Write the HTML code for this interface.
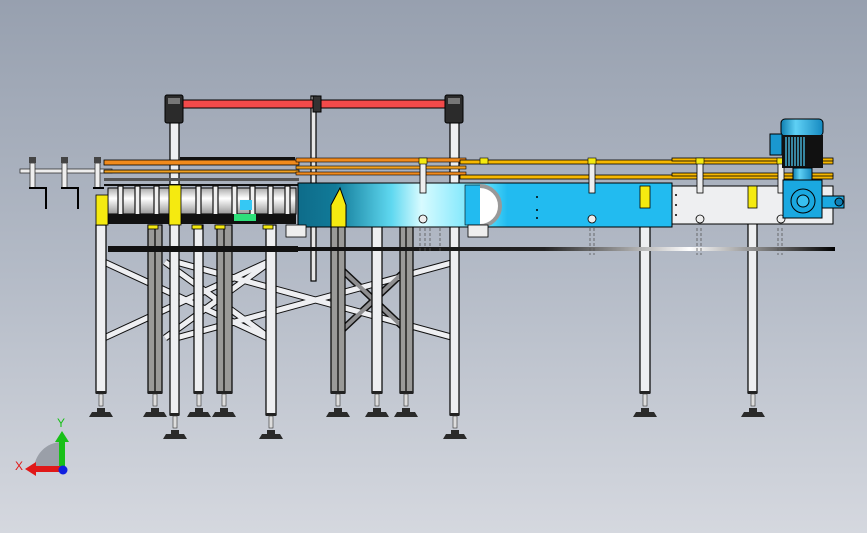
<!DOCTYPE html>
<html><head><meta charset="utf-8"><style>
html,body{margin:0;padding:0;width:867px;height:533px;overflow:hidden}
body{background:linear-gradient(#97a0af,#b3bac6 50%,#d5d8df)}
svg{position:absolute;left:0;top:0}
text{font-family:"Liberation Sans",sans-serif}
</style></head><body>
<svg width="867" height="533" viewBox="0 0 867 533">
<defs>
<linearGradient id="belt" x1="0" x2="1" y1="0" y2="0">
<stop offset="0" stop-color="#0e6c8a"/><stop offset="0.1" stop-color="#117a98"/>
<stop offset="0.25" stop-color="#5fd8f0"/><stop offset="0.33" stop-color="#d8fbff"/>
<stop offset="0.5" stop-color="#5ee0fb"/><stop offset="0.56" stop-color="#22bbf0"/><stop offset="1" stop-color="#22bbf0"/>
</linearGradient>
<linearGradient id="drum" x1="0" x2="0" y1="0" y2="1">
<stop offset="0" stop-color="#aaa"/><stop offset="0.4" stop-color="#fff"/><stop offset="1" stop-color="#999"/>
</linearGradient>
<linearGradient id="mot" x1="0" x2="1"><stop offset="0" stop-color="#0f7fb0"/><stop offset="0.35" stop-color="#5fd0f5"/><stop offset="1" stop-color="#1589c0"/></linearGradient>
<linearGradient id="rod" x1="0" x2="1"><stop offset="0" stop-color="#000"/><stop offset="0.6" stop-color="#222"/><stop offset="0.8" stop-color="#fff"/><stop offset="1" stop-color="#000"/></linearGradient>
</defs>

<g stroke-linecap="butt">
<g stroke="#111" stroke-width="7">
<line x1="104" y1="262" x2="268" y2="338"/><line x1="104" y1="338" x2="268" y2="262"/>
<line x1="176" y1="262" x2="455" y2="338"/><line x1="176" y1="338" x2="455" y2="262"/>
<line x1="165" y1="262" x2="270" y2="338"/><line x1="165" y1="338" x2="270" y2="262"/>
<line x1="340" y1="268" x2="408" y2="332"/><line x1="340" y1="332" x2="408" y2="268"/>
</g>
<g stroke="#eeeff2" stroke-width="5">
<line x1="104" y1="262" x2="268" y2="338"/><line x1="104" y1="338" x2="268" y2="262"/>
<line x1="176" y1="262" x2="455" y2="338"/><line x1="176" y1="338" x2="455" y2="262"/>
<line x1="165" y1="262" x2="270" y2="338"/><line x1="165" y1="338" x2="270" y2="262"/>
</g>
<g stroke="#8e8e90" stroke-width="4">
<line x1="340" y1="268" x2="408" y2="332"/><line x1="340" y1="332" x2="408" y2="268"/>
</g>
</g>

<g stroke="#000" stroke-width="1.2">
<rect x="148" y="225" width="14" height="168" fill="#9a9a98"/><line x1="155" y1="225" x2="155" y2="393"/>
<rect x="217" y="225" width="15" height="168" fill="#9a9a98"/><line x1="224" y1="225" x2="224" y2="393"/>
<rect x="331" y="205" width="14" height="188" fill="#9a9a98"/><line x1="338" y1="205" x2="338" y2="393"/>
<rect x="400" y="225" width="13" height="168" fill="#9a9a98"/><line x1="406" y1="225" x2="406" y2="393"/>
<rect x="96" y="225" width="10" height="168" fill="#eeeff1"/>
<rect x="194" y="225" width="9" height="168" fill="#eeeff1"/>
<rect x="372" y="225" width="10" height="168" fill="#eeeff1"/>
<rect x="640" y="205" width="10" height="188" fill="#eeeff1"/>
<rect x="748" y="205" width="9" height="188" fill="#eeeff1"/>
<rect x="170" y="110" width="9" height="305" fill="#eeeff1"/>
<rect x="266" y="225" width="10" height="190" fill="#eeeff1"/>
<rect x="450" y="110" width="9" height="305" fill="#eeeff1"/>
<rect x="311" y="96" width="5" height="185" fill="#e6e6e6"/>
</g>
<g fill="#222">
<rect x="96" y="391" width="10" height="3"/><rect x="148" y="391" width="14" height="3"/><rect x="194" y="391" width="9" height="3"/>
<rect x="217" y="391" width="15" height="3"/><rect x="331" y="391" width="14" height="3"/><rect x="372" y="391" width="10" height="3"/>
<rect x="400" y="391" width="13" height="3"/><rect x="640" y="391" width="10" height="3"/><rect x="748" y="391" width="9" height="3"/>
<rect x="170" y="413" width="9" height="3"/><rect x="266" y="413" width="10" height="3"/><rect x="450" y="413" width="9" height="3"/>
</g>
<g fill="#ddd" stroke="#333" stroke-width="0.6">
<rect x="99" y="394" width="4" height="12"/><rect x="153" y="394" width="4" height="12"/><rect x="197" y="394" width="4" height="12"/>
<rect x="222" y="394" width="4" height="12"/><rect x="336" y="394" width="4" height="12"/><rect x="375" y="394" width="4" height="12"/>
<rect x="404" y="394" width="4" height="12"/><rect x="643" y="394" width="4" height="12"/><rect x="751" y="394" width="4" height="12"/>
<rect x="173" y="416" width="4" height="12"/><rect x="269" y="416" width="4" height="12"/><rect x="453" y="416" width="4" height="12"/>
</g>
<g fill="#2a2a2a">
<path d="M89 417 h24 l-3 -5 h-18z M143 417 h24 l-3 -5 h-18z M187 417 h24 l-3 -5 h-18z M212 417 h24 l-3 -5 h-18z M326 417 h24 l-3 -5 h-18z M365 417 h24 l-3 -5 h-18z M394 417 h24 l-3 -5 h-18z M633 417 h24 l-3 -5 h-18z M741 417 h24 l-3 -5 h-18z"/>
<path d="M163 439 h24 l-3 -5 h-18z M259 439 h24 l-3 -5 h-18z M443 439 h24 l-3 -5 h-18z"/>
<path d="M97 412 h8 v-4 h-8z M151 412 h8 v-4 h-8z M195 412 h8 v-4 h-8z M220 412 h8 v-4 h-8z M334 412 h8 v-4 h-8z M373 412 h8 v-4 h-8z M402 412 h8 v-4 h-8z M641 412 h8 v-4 h-8z M749 412 h8 v-4 h-8z M171 434 h8 v-4 h-8z M267 434 h8 v-4 h-8z M451 434 h8 v-4 h-8z"/>
</g>

<rect x="108" y="247" width="727" height="4" fill="url(#rod)"/>
<rect x="108" y="246" width="190" height="6" fill="#111"/>

<g stroke="#555" stroke-width="0.8" stroke-dasharray="3 2">
<line x1="590" y1="228" x2="590" y2="255"/><line x1="594" y1="228" x2="594" y2="255"/>
<line x1="697" y1="228" x2="697" y2="255"/><line x1="701" y1="228" x2="701" y2="255"/>
<line x1="778" y1="228" x2="778" y2="255"/><line x1="782" y1="228" x2="782" y2="255"/>
<line x1="420" y1="228" x2="420" y2="252"/><line x1="425" y1="228" x2="425" y2="252"/><line x1="430" y1="228" x2="430" y2="252"/><line x1="440" y1="228" x2="440" y2="252"/>
</g>

<rect x="183" y="100" width="264" height="8" fill="#f24a4a" stroke="#000" stroke-width="1"/>
<rect x="313" y="96" width="8" height="16" fill="#333" stroke="#000"/>
<g fill="#2b2b2b" stroke="#000">
<rect x="165" y="95" width="18" height="28" rx="2"/><rect x="445" y="95" width="18" height="28" rx="2"/>
</g>
<g fill="#777"><rect x="168" y="98" width="12" height="6"/><rect x="448" y="98" width="12" height="6"/></g>

<rect x="20" y="169" width="92" height="4" fill="#eee" stroke="#333" stroke-width="0.8"/>
<g fill="#eee" stroke="#333" stroke-width="0.8">
<rect x="30" y="163" width="5" height="25"/><rect x="62" y="163" width="5" height="25"/><rect x="95" y="163" width="5" height="25"/>
</g>
<g fill="#444"><rect x="29" y="157" width="7" height="6"/><rect x="61" y="157" width="7" height="6"/><rect x="94" y="157" width="7" height="6"/></g>
<path d="M29 188 H46 V209 M61 188 H78 V209 M93 188 H104" stroke="#000" stroke-width="2" fill="none"/>

<rect x="104" y="160" width="195" height="5" fill="#f08a1c" stroke="#000" stroke-width="0.8"/>
<rect x="104" y="170" width="195" height="3" fill="#f0a020" stroke="#000" stroke-width="0.8"/>
<rect x="104" y="178" width="195" height="3" fill="#555"/>
<rect x="104" y="184" width="195" height="2" fill="#111"/>
<rect x="108" y="188" width="188" height="26" fill="url(#drum)" stroke="#000"/>
<g fill="#eee" stroke="#111" stroke-width="1.2">
<rect x="118" y="186" width="5" height="30"/><rect x="135" y="186" width="5" height="30"/><rect x="154" y="186" width="5" height="30"/>
<rect x="196" y="186" width="5" height="30"/><rect x="213" y="186" width="5" height="30"/><rect x="232" y="186" width="5" height="30"/>
<rect x="250" y="186" width="5" height="30"/><rect x="268" y="186" width="5" height="30"/><rect x="285" y="186" width="5" height="30"/>
</g>
<rect x="108" y="214" width="188" height="10" fill="#111"/>
<rect x="234" y="214" width="22" height="7" fill="#2ee07a"/>
<rect x="240" y="200" width="12" height="10" fill="#35c8f4"/>
<g fill="#f5ea10" stroke="#000" stroke-width="0.8">
<rect x="96" y="195" width="12" height="30"/><rect x="169" y="185" width="12" height="40"/>
<rect x="148" y="225" width="10" height="4"/><rect x="192" y="225" width="10" height="4"/><rect x="215" y="225" width="10" height="4"/><rect x="263" y="225" width="10" height="4"/>
</g>
<rect x="180" y="157" width="115" height="3" fill="#111"/>
<rect x="296" y="158" width="170" height="4" fill="#f08a1c" stroke="#000" stroke-width="0.6"/>
<rect x="296" y="166" width="170" height="3" fill="#f0a020" stroke="#000" stroke-width="0.6"/>
<rect x="296" y="172" width="170" height="3" fill="#f08a1c" stroke="#000" stroke-width="0.6"/>

<g fill="#f7b800" stroke="#000" stroke-width="0.8">
<rect x="460" y="160" width="373" height="4"/><rect x="460" y="175" width="373" height="4"/>
<rect x="672" y="158" width="161" height="3"/><rect x="672" y="173" width="161" height="3"/>
</g>

<rect x="298" y="183" width="374" height="44" fill="url(#belt)" stroke="#000"/>
<rect x="672" y="186" width="161" height="38" fill="#eeeff1" stroke="#000"/>
<rect x="465" y="185" width="20" height="40" fill="#22bbf0" stroke="#000" stroke-width="0.6"/>
<path d="M480 186 a20 20 0 0 1 0 40" fill="#fff" stroke="#999" stroke-width="4"/>
<rect x="640" y="186" width="10" height="22" fill="#f5ea10" stroke="#000" stroke-width="0.8"/>
<rect x="748" y="186" width="9" height="22" fill="#f5ea10" stroke="#000" stroke-width="0.8"/>
<path d="M331 205 L340 188 L346 205 V227 H331z" fill="#f5ea10" stroke="#000"/>
<g fill="#000"><circle cx="537" cy="197" r="1"/><circle cx="537" cy="210" r="1"/><circle cx="537" cy="218" r="1"/><circle cx="676" cy="195" r="1"/><circle cx="676" cy="205" r="1"/><circle cx="676" cy="215" r="1"/></g>
<g fill="#eee" stroke="#000" stroke-width="0.8">
<rect x="420" y="163" width="6" height="30"/><rect x="589" y="163" width="6" height="30"/><rect x="697" y="163" width="6" height="30"/><rect x="778" y="163" width="6" height="30"/>
<circle cx="423" cy="219" r="4"/><circle cx="592" cy="219" r="4"/><circle cx="700" cy="219" r="4"/><circle cx="781" cy="219" r="4"/>
</g>
<g fill="#f5ea10" stroke="#000" stroke-width="0.6">
<rect x="419" y="158" width="8" height="6"/><rect x="588" y="158" width="8" height="6"/><rect x="696" y="158" width="8" height="6"/><rect x="777" y="158" width="8" height="6"/><rect x="480" y="158" width="8" height="6"/>
</g>
<g fill="#eee" stroke="#000" stroke-width="0.8"><rect x="286" y="225" width="20" height="12"/><rect x="468" y="225" width="20" height="12"/></g>

<rect x="770" y="134" width="12" height="21" fill="#1a98d0" stroke="#000"/>
<rect x="781" y="119" width="42" height="17" rx="4" fill="url(#mot)" stroke="#000"/>
<rect x="782" y="135" width="41" height="33" fill="#111"/>
<g stroke="#4fc6ee" stroke-width="1.3"><line x1="786" y1="137" x2="786" y2="166"/><line x1="789" y1="137" x2="789" y2="166"/><line x1="792" y1="137" x2="792" y2="166"/><line x1="795" y1="137" x2="795" y2="166"/><line x1="798" y1="137" x2="798" y2="166"/><line x1="801" y1="137" x2="801" y2="166"/><line x1="804" y1="137" x2="804" y2="166"/></g>
<rect x="793" y="168" width="19" height="13" fill="url(#mot)" stroke="#000"/>
<rect x="783" y="180" width="39" height="38" fill="#1aa8e0" stroke="#000"/>
<circle cx="803" cy="201" r="12" fill="#1aa8e0" stroke="#000"/><circle cx="803" cy="201" r="6" fill="#38c0f0" stroke="#000"/>
<rect x="822" y="196" width="22" height="12" fill="#1aa8e0" stroke="#000"/>
<circle cx="839" cy="202" r="4" fill="#0e7fb5" stroke="#000"/>

<path d="M62 470 L62 442 A28 28 0 0 0 34 470z" fill="#9a9fa8"/>
<rect x="59" y="440" width="6" height="30" fill="#18c018"/>
<path d="M55 442 L62 431 L69 442z" fill="#18c018"/>
<rect x="34" y="466" width="28" height="6" fill="#e01818"/>
<path d="M36 462 L25 469 L36 476z" fill="#e01818"/>
<circle cx="63" cy="470" r="4.5" fill="#1020e0"/>
<text x="15" y="470" font-size="12" fill="#e01818">X</text>
<text x="57" y="427" font-size="12" fill="#18c018">Y</text>
</svg>
</body></html>
